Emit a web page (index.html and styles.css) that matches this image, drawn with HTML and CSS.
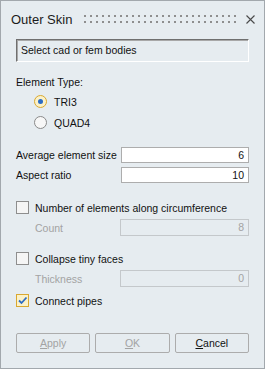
FILE: index.html
```html
<!DOCTYPE html>
<html lang="en">
<head>
    <meta charset="UTF-8">
    <title>Outer Skin</title>
    <link rel="stylesheet" href="styles.css">
</head>
<body>
    <div class="dialog">
        <!-- Title bar -->
        <div class="titlebar">
            <span class="title">Outer Skin</span>
            <span class="grip"></span>
            <svg class="close" width="9" height="9" viewBox="0 0 9 9">
                <path d="M0.5 0.5 L8.5 8.5 M8.5 0.5 L0.5 8.5" stroke="#4a4a4a" stroke-width="1.1" fill="none"/>
            </svg>
        </div>

        <!-- Selection -->
        <div class="selector">Select cad or fem bodies</div>

        <!-- Element type -->
        <div class="label">Element Type:</div>
        <div class="radios">
            <div class="radio-row">
                <span class="radio checked"></span>
                <span>TRI3</span>
            </div>
            <div class="radio-row">
                <span class="radio"></span>
                <span>QUAD4</span>
            </div>
        </div>

        <!-- Sizes -->
        <div class="field field-first">
            <span class="field-label">Average element size</span>
            <span class="input">6</span>
        </div>
        <div class="field">
            <span class="field-label">Aspect ratio</span>
            <span class="input">10</span>
        </div>

        <div class="check-row check-number">
            <span class="check"></span>
            <span>Number of elements along circumference</span>
        </div>
        <div class="field field-sub">
            <span class="field-label indent disabled">Count</span>
            <span class="input disabled">8</span>
        </div>

        <div class="check-row check-collapse">
            <span class="check"></span>
            <span>Collapse tiny faces</span>
        </div>
        <div class="field field-sub">
            <span class="field-label indent disabled">Thickness</span>
            <span class="input disabled">0</span>
        </div>

        <div class="check-row check-connect">
            <span class="check checked">
                <svg width="11" height="11" viewBox="0 0 11 11">
                    <path d="M2 5.5 L4.5 8 L9.5 2.5" stroke="#2d6cc4" stroke-width="1.8" fill="none"/>
                </svg>
            </span>
            <span>Connect pipes</span>
        </div>

        <!-- Buttons -->
        <div class="buttons">
            <button class="btn" disabled><u>A</u>pply</button>
            <button class="btn" disabled><u>O</u>K</button>
            <button class="btn"><u>C</u>ancel</button>
        </div>
    </div>
</body>
</html>
```

FILE: styles.css
```css
/* General Styles */
body {
    margin: 0;
    padding: 0;
    font-family: "Liberation Sans", Arial, sans-serif;
    font-size: 10.5px;
    color: #111;
}

.dialog {
    width: 265px;
    height: 369px;
    box-sizing: border-box;
    border: 1px solid #a2a8ad;
    background-color: #e6ecf0;
    padding: 0 15px;
    display: flex;
    flex-direction: column;
}

/* Title bar */
.titlebar {
    height: 36px;
    margin: 0 -15px 2px;
    padding: 0 9px 0 10px;
    display: flex;
    align-items: center;
}

.title {
    font-size: 13px;
    color: #1b1b1b;
}

.grip {
    flex: 1;
    height: 8px;
    margin: 0 10px 0 12px;
    background-image:
        linear-gradient(to right, #8e8e8e 2px, transparent 2px),
        linear-gradient(to right, #8e8e8e 2px, transparent 2px);
    background-size: 6px 2px, 6px 2px;
    background-position: 0 0, 0 6px;
    background-repeat: repeat-x;
}

.close {
    display: block;
}

/* Selection box */
.selector {
    height: 23px;
    box-sizing: border-box;
    border: 1px solid;
    border-color: #6f6f6f #ffffff #ffffff #6f6f6f;
    box-shadow: inset 1px 1px 0 #a8a8a8;
    padding-left: 4px;
    line-height: 21px;
}

.label {
    margin-top: 14px;
    line-height: 13px;
}

/* Radios */
.radios {
    margin-top: 2px;
    padding-left: 18px;
}

.radio-row {
    height: 21px;
    display: flex;
    align-items: center;
    gap: 7px;
}

.radio {
    width: 13px;
    height: 13px;
    box-sizing: border-box;
    border: 1px solid #8a8a8a;
    border-radius: 50%;
    background-color: #f7f7f7;
    display: flex;
    align-items: center;
    justify-content: center;
}

.radio.checked {
    border-color: #d9a830;
    background-color: #fbf1c8;
}

.radio.checked::after {
    content: "";
    width: 5px;
    height: 5px;
    border-radius: 50%;
    background-color: #2a6bc6;
}

/* Fields */
.field {
    display: grid;
    grid-template-columns: 105px 1fr;
    align-items: center;
    height: 16px;
    margin-top: 4px;
}

.field-first {
    margin-top: 14px;
}

.field-sub {
    margin-top: 5px;
    height: 17px;
}

.indent {
    padding-left: 19px;
}

.input {
    height: 100%;
    box-sizing: border-box;
    border: 1px solid #adadad;
    background-color: #ffffff;
    text-align: right;
    padding-right: 4px;
    line-height: 14px;
}

.field-sub .input {
    margin-left: -1px;
    line-height: 15px;
}

.input.disabled {
    background-color: #e6ecf0;
    border-color: #c4c8cb;
    color: #a3a3a3;
}

.field-label.disabled {
    color: #a3a3a3;
}

/* Checkboxes */
.check-row {
    height: 13px;
    display: flex;
    align-items: center;
    gap: 6px;
}

.check-number {
    margin-top: 18px;
}

.check-collapse {
    margin-top: 16px;
}

.check-connect {
    margin-top: 7px;
}

.check {
    width: 13px;
    height: 13px;
    box-sizing: border-box;
    border: 1px solid #8e8e8e;
    background-color: #f5f5f5;
    display: flex;
    align-items: center;
    justify-content: center;
}

.check.checked {
    border-color: #d9a830;
    background-color: #fbf1c8;
}

.check svg {
    display: block;
}

/* Buttons */
.buttons {
    margin-top: 26px;
    display: flex;
    gap: 5px;
}

.btn {
    flex: 1;
    height: 20px;
    border: 1px solid #acacac;
    border-radius: 2px;
    background-color: #e6ecf0;
    font-family: inherit;
    font-size: 10.5px;
    color: #111;
    padding: 0;
}

.btn:disabled {
    color: #a3a3a3;
}
```
